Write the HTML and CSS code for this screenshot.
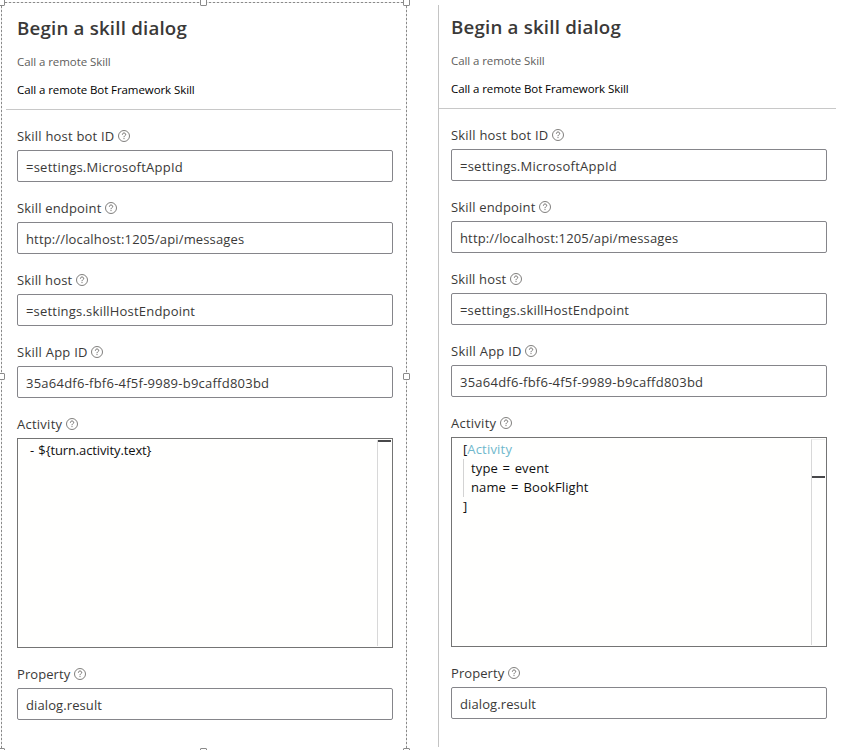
FILE: index.html
```
<!DOCTYPE html>
<html lang="en">
<head>
<meta charset="utf-8">
<title>Begin a skill dialog</title>
<link rel="stylesheet" href="styles.css">
</head>
<body>
<svg class="defs" width="0" height="0"><symbol id="help" viewBox="0 0 12 12"><circle cx="6" cy="6" r="5.5" fill="none" stroke="currentColor" stroke-width=".8"/><path d="M4.4 4.7C4.4 3.6 5.1 3 6 3s1.7.6 1.7 1.5C7.7 5.7 6 5.7 6 7.2M6 8.1v1" fill="none" stroke="currentColor" stroke-width=".9"/></symbol></svg>
<main class="panels">
  <section class="panel panel-selected">
    <header class="head">
      <h2>Begin a skill dialog</h2>
      <p class="sub">Call a remote Skill</p>
      <p class="desc">Call a remote Bot Framework Skill</p>
    </header>
    <div class="fields">
      <div class="field"><div class="label"><span class="t1">Skill host bot ID</span><svg class="help"><use href="#help"/></svg></div><div class="input"><span class="v1">=settings.MicrosoftAppId</span></div></div>
      <div class="field"><div class="label"><span class="t2">Skill endpoint</span><svg class="help"><use href="#help"/></svg></div><div class="input"><span class="v2">http://localhost:1205/api/messages</span></div></div>
      <div class="field"><div class="label"><span class="t3">Skill host</span><svg class="help"><use href="#help"/></svg></div><div class="input"><span class="v3">=settings.skillHostEndpoint</span></div></div>
      <div class="field"><div class="label"><span class="t4">Skill App ID</span><svg class="help"><use href="#help"/></svg></div><div class="input"><span class="v4">35a64df6-fbf6-4f5f-9989-b9caffd803bd</span></div></div>
      <div class="field"><div class="label"><span class="t5">Activity</span><svg class="help"><use href="#help"/></svg></div>
        <div class="editor"><div class="code code-plain"><div><span class="c1">- ${turn.activity.text}</span></div></div><div class="ruler ruler-top"><i></i></div></div></div>
      <div class="field"><div class="label"><span class="t6">Property</span><svg class="help"><use href="#help"/></svg></div><div class="input"><span class="v5">dialog.result</span></div></div>
    </div>
    <div class="selection"><i class="h tl"></i><i class="h tc"></i><i class="h tr"></i><i class="h ml"></i><i class="h mr"></i><i class="h bl"></i><i class="h bc"></i><i class="h br"></i></div>
  </section>
  <section class="panel panel-plain">
    <header class="head">
      <h2>Begin a skill dialog</h2>
      <p class="sub">Call a remote Skill</p>
      <p class="desc">Call a remote Bot Framework Skill</p>
    </header>
    <div class="fields">
      <div class="field"><div class="label"><span class="t1">Skill host bot ID</span><svg class="help"><use href="#help"/></svg></div><div class="input"><span class="v1">=settings.MicrosoftAppId</span></div></div>
      <div class="field"><div class="label"><span class="t2">Skill endpoint</span><svg class="help"><use href="#help"/></svg></div><div class="input"><span class="v2">http://localhost:1205/api/messages</span></div></div>
      <div class="field"><div class="label"><span class="t3">Skill host</span><svg class="help"><use href="#help"/></svg></div><div class="input"><span class="v3">=settings.skillHostEndpoint</span></div></div>
      <div class="field"><div class="label"><span class="t4">Skill App ID</span><svg class="help"><use href="#help"/></svg></div><div class="input"><span class="v4">35a64df6-fbf6-4f5f-9989-b9caffd803bd</span></div></div>
      <div class="field"><div class="label"><span class="t5">Activity</span><svg class="help"><use href="#help"/></svg></div>
        <div class="editor"><div class="code"><div>[<span class="type">Activity</span></div><div class="nest"><div><span class="c2">type = event</span></div><div><span class="c3">name = BookFlight</span></div></div><div>]</div></div><div class="ruler ruler-mid"><i></i></div></div></div>
      <div class="field"><div class="label"><span class="t6">Property</span><svg class="help"><use href="#help"/></svg></div><div class="input"><span class="v5">dialog.result</span></div></div>
    </div>
  </section>
</main>
</body>
</html>
```
FILE: styles.css
```
* { box-sizing: border-box; }
body { margin: 0; background: #fff; color: #3a3938; font-family: "Open Sans", "Noto Sans", sans-serif; font-size: 13px; overflow: hidden; }
.defs { display: block; }
.panels { display: flex; height: 750px; }
.panel { position: relative; }
.panel-selected { width: 407px; padding-left: 6px; padding-top: 6px; }
.panel-plain { width: 398px; height: 742px; margin: 5px 0 0 31px; border-left: 1px solid #c4c4c4; }
.head { height: 104px; border-bottom: 1px solid #c8c8c8; padding-left: 11px; }
.panel-selected .head { width: 395px; }
.panel-plain .head, .panel-plain .fields { padding-left: 12px; }
h2 { margin: 0; padding-top: 8px; font-size: 18.7px; line-height: 28px; font-weight: 600; letter-spacing: .2px; }
p { margin: 0; font-size: 11.5px; line-height: 16px; letter-spacing: -.08px; }
.sub { margin-top: 12px; color: #605e5c; }
.desc { margin-top: 12px; color: #000; }
.fields { padding: 15px 0 0 11px; }
.field { width: 376px; }
.field + .field { margin-top: 15px; }
.label { display: flex; align-items: center; height: 20px; margin-bottom: 5px; gap: 3.5px; padding-top: 1px; }
.help { width: 12px; height: 12px; color: #605e5c; }
.input { height: 32px; border: 1px solid #85858a; border-radius: 2px; padding: 1px 8px 0; line-height: 30px; white-space: nowrap; }
.t1 { letter-spacing: .2px; }
.t2 { letter-spacing: .17px; }
.t3 { letter-spacing: .15px; }
.t4 { letter-spacing: .25px; }
.t5 { letter-spacing: .25px; }
.t6 { letter-spacing: .08px; }
.v1 { letter-spacing: .24px; }
.v2 { letter-spacing: .15px; }
.v3 { letter-spacing: .19px; }
.v4 { letter-spacing: .24px; }
.v5 { letter-spacing: .1px; }
.editor { display: flex; height: 210px; border: 1px solid #747474; background: #fffffe; color: #111; }
.code { flex: 1; padding-left: 11px; line-height: 19px; padding-top: 2px; }
.code-plain { padding-left: 12px; }
.c1 { letter-spacing: -.12px; word-spacing: 1px; }
.c2 { letter-spacing: .15px; word-spacing: 1px; }
.c3 { letter-spacing: .12px; word-spacing: 1.5px; }
.type { color: #6fb8cc; letter-spacing: .2px; }
.nest { border-left: 1px solid #d3d3d3; padding-left: 7px; }
.ruler { width: 14px; height: 206px; margin: 1px 1px 0 0; border-left: 1px solid #d8d8d8; border-top: 1px solid #eee; }
.ruler i { display: block; width: 13px; height: 2px; background: #48484a; }
.ruler-top { border-top: 0; }
.ruler-mid i { margin-top: 36px; }
.selection {
  --across: repeating-linear-gradient(90deg, #8a8a8a 0 2px, #e4e4e4 2px 4px);
  --down: repeating-linear-gradient(180deg, #8a8a8a 0 2px, #e4e4e4 2px 4px);
  position: absolute; left: 1px; top: 2px; width: 406px; height: 749px;
  background: var(--across) 0 0 / 100% 1px no-repeat, var(--down) 0 0 / 1px 100% no-repeat, var(--down) 100% 0 / 1px 100% no-repeat;
}
.h { position: absolute; width: 7px; height: 7px; border: 1px solid #8a8a8a; border-radius: 1px; background: #fff; }
.tl, .ml, .bl { left: -3px; }
.tc, .bc { left: 199px; }
.tr, .mr, .br { left: 402px; }
.tl, .tc, .tr { top: -3px; }
.ml, .mr { top: 371px; }
.bl, .bc, .br { top: 746px; }
```
